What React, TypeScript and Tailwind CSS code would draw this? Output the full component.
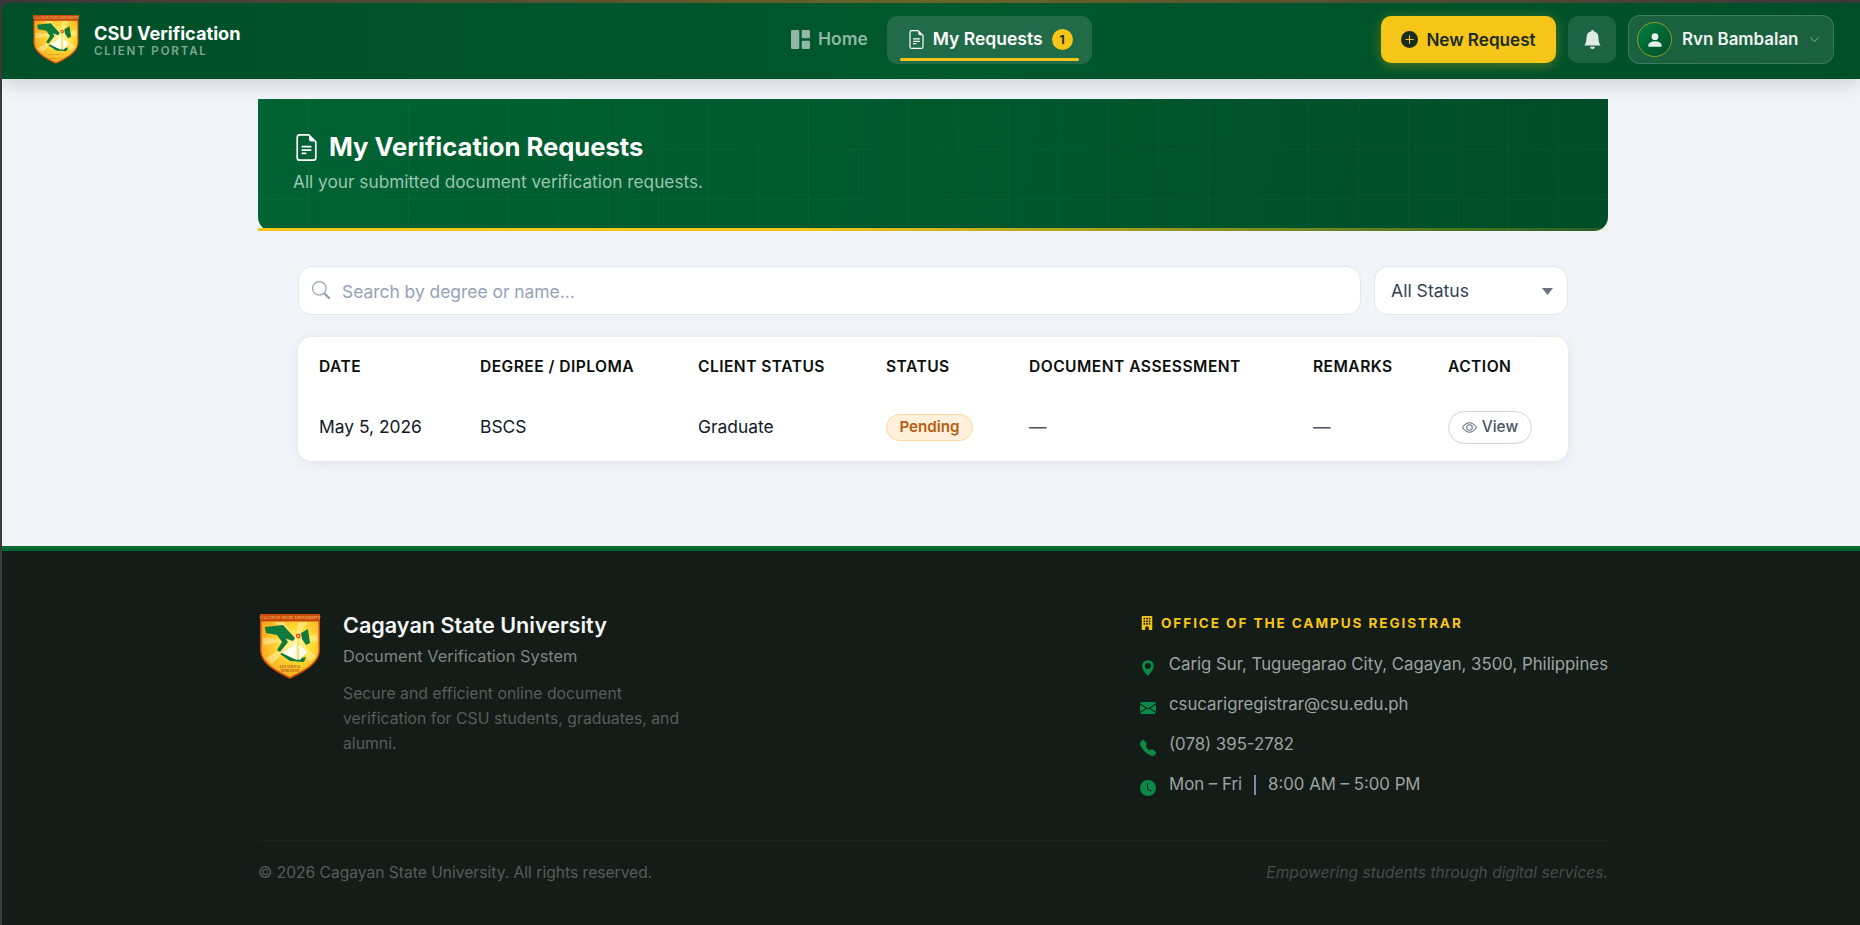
import {
  BsBellFill,
  BsBuildingFill,
  BsChevronDown,
  BsClockFill,
  BsEnvelopeFill,
  BsEye,
  BsFileEarmarkText,
  BsGeoAltFill,
  BsGrid1X2Fill,
  BsPersonFill,
  BsPlusCircleFill,
  BsSearch,
  BsTelephoneFill,
} from "react-icons/bs"

// CSU seal, drawn by hand since there are no image files here
function CsuSeal({ className }: { className?: string }) {
  return (
    <svg viewBox="0 0 60 65" className={className}>
      <defs>
        <radialGradient id="sealSun" cx="0.6" cy="0.4" r="0.7">
          <stop offset="0" stopColor="#fff9b0" />
          <stop offset="0.4" stopColor="#ffdc34" />
          <stop offset="1" stopColor="#f8a01e" />
        </radialGradient>
      </defs>
      <path d="M0 0H60V36C60 50 44 58 30 65C16 58 0 50 0 36Z" fill="#c9480c" />
      <path d="M1.5 7.5H58.5V36C58.5 49 43 56.5 30 63C17 56.5 1.5 49 1.5 36Z" fill="url(#sealSun)" />
      <path d="M36 26L14 8H24ZM36 26L38 8H48ZM36 26L3 24V31ZM36 26L57 20V28ZM36 26L6 44L12 50ZM36 26L56 42L50 48Z" fill="#fff6b0" opacity="0.5" />
      <text x="30" y="5.4" textAnchor="middle" fontSize="4.3" fontFamily="Liberation Serif, serif" fill="#ffd87a">
        CAGAYAN STATE UNIVERSITY
      </text>
      <path d="M5 13L23 11L35 24L33 27L24 24L17 21L6 19Z" fill="#0f7a3c" />
      <path d="M17 21L24 22L28 28L20 38L17 36L22 28Z" fill="#0f7a3c" />
      <path d="M41 19L48 15L50 29L46 31L42 25Z" fill="#0f7a3c" />
      <path d="M20 40L30 47L44 48L46 43L35 45L24 38Z" fill="#0f7a3c" />
      <path d="M22 39L36 30L37 46L30 43Z" fill="#fffdf0" />
      <path d="M39 31L47 38L40 46L39 45Z" fill="#fffdf0" />
      <rect x="37.4" y="24" width="1.8" height="22" fill="#f3e27a" />
      <circle cx="38.3" cy="22" r="2.4" fill="#e8461c" />
      <circle cx="38.3" cy="22" r="1.1" fill="#ffe24a" />
      <text x="30" y="53.5" textAnchor="middle" fontSize="3.2" fontFamily="Liberation Serif, serif" fill="#8a2b08">
        LUX VERITAS
      </text>
      <text x="30" y="57.8" textAnchor="middle" fontSize="3" fontFamily="Liberation Serif, serif" fill="#8a2b08">
        MCMLXXVIII
      </text>
    </svg>
  )
}

function Header() {
  return (
    <header className="relative z-10 flex h-[76px] shrink-0 items-center rounded-tl-[6px] bg-[linear-gradient(90deg,#004f29,#00582d_50%,#004f29)] pb-[3px] pl-[30px] pr-[26px] shadow-[0_4px_20px_rgba(0,0,0,0.16)]">
      <div className="flex w-[738px] items-center gap-[14px]">
        <CsuSeal className="h-[49px] w-[48px]" />
        <div>
          <div className="text-[18.2px] leading-[22px] font-bold text-white">CSU Verification</div>
          <div className="text-[11.5px] leading-[14px] font-semibold tracking-[1.86px] text-[#7fa892]">CLIENT PORTAL</div>
        </div>
      </div>
      <nav className="flex items-center">
        <a className="flex h-[48px] items-center gap-[8px] pl-[21px] pr-[19px] text-[17.5px] font-semibold text-[#8fb8a5]">
          <BsGrid1X2Fill className="h-[19px] w-[19px]" />
          Home
        </a>
        <a className="relative flex h-[48px] items-center gap-[7px] rounded-[10px] bg-[#226b49] pl-[20px] pr-[19px] text-[17.5px] font-semibold text-white">
          <BsFileEarmarkText className="h-[19px] w-[19px]" />
          My Requests
          <span className="ml-[2px] flex h-[21px] w-[21px] items-center justify-center rounded-full bg-[#f5c518] text-[12px] font-bold text-[#1a2b1f]">
            1
          </span>
          <span className="absolute bottom-[3px] left-[13px] right-[13px] h-[3px] rounded-full bg-[#f5c518]" />
        </a>
      </nav>
      <div className="ml-auto flex items-center gap-[12px]">
        <button className="flex h-[47px] w-[175px] items-center justify-center gap-[8px] rounded-[10px] bg-[#f5c518] text-[17.1px] font-semibold text-[#1a2b1f] shadow-[0_2px_12px_rgba(245,197,24,0.35)]">
          <BsPlusCircleFill className="h-[17px] w-[17px]" />
          New Request
        </button>
        <button className="flex h-[47px] w-[48px] items-center justify-center rounded-[10px] bg-[#1d6443] text-[#e0e9e4]">
          <BsBellFill className="h-[19px] w-[19px]" />
        </button>
        <div className="flex h-[49px] w-[206px] items-center rounded-[12px] border border-white/15 bg-white/10 pl-[8px] text-white">
          <div className="flex h-[35px] w-[35px] items-center justify-center rounded-full border border-[#8f9a26] bg-[linear-gradient(135deg,#00803f,#004d27)]">
            <BsPersonFill className="h-[18px] w-[18px] text-[#e8f0ec]" />
          </div>
          <span className="ml-[10px] text-[16.9px] font-semibold text-[#eef3f0]">Rvn Bambalan</span>
          <BsChevronDown className="ml-[11px] h-[11px] w-[11px] text-[#8fb8a5]" />
        </div>
      </div>
    </header>
  )
}

function PageHero() {
  return (
    <section className="relative mt-[20px] h-[132px] rounded-b-[14px] bg-[linear-gradient(rgba(255,255,255,0.025)_1px,transparent_1px),linear-gradient(90deg,rgba(255,255,255,0.025)_1px,transparent_1px),linear-gradient(100deg,#006333,#004d27)] bg-[size:50px_50px,50px_50px,100%_100%] pl-[35px] pt-[33px]">
      <div className="flex items-center gap-[9px]">
        <BsFileEarmarkText className="h-[27px] w-[27px] text-white" />
        <h1 className="text-[25.6px] leading-[30px] font-bold text-white">My Verification Requests</h1>
      </div>
      <p className="mt-[8px] text-[17.25px] leading-[24px] text-[#9cc5b0]">All your submitted document verification requests.</p>
      <div className="absolute inset-x-0 bottom-0 h-[3px] bg-[linear-gradient(90deg,#f5c518,#f5c518_40%,rgba(245,197,24,0.15))]" />
    </section>
  )
}

function Filters() {
  return (
    <div className="mx-[40px] mt-[35px] flex gap-[13px]">
      <div className="relative flex-1">
        <BsSearch className="absolute left-[14px] top-[15px] h-[18px] w-[18px] text-[#94a3b8]" />
        <input
          placeholder="Search by degree or name..."
          className="h-[49px] w-full rounded-[14px] border border-[#e2e8f0] bg-white pl-[43px] pt-[2px] text-[17.4px] outline-none placeholder:text-[#94a3b8]"
        />
      </div>
      <div className="relative h-[49px] w-[194px] rounded-[14px] border border-[#e2e8f0] bg-white">
        <select className="h-full w-full appearance-none bg-transparent pl-[16px] pt-[2px] text-[17.6px] text-[#334155] outline-none">
          <option>All Status</option>
        </select>
        <svg viewBox="0 0 11 7" className="absolute right-[14px] top-[21px] h-[7px] w-[11px]">
          <path d="M0 0H11L5.5 7Z" fill="#6b7280" />
        </svg>
      </div>
    </div>
  )
}

const columns = ["Date", "Degree / Diploma", "Client Status", "Status", "Document Assessment", "Remarks", "Action"]

function RequestsTable() {
  return (
    <div className="mx-[40px] mt-[22px] rounded-[14px] bg-white px-[21px] shadow-[0_2px_12px_rgba(15,23,42,0.08)]">
      <table className="w-full table-fixed text-left">
        <colgroup>
          <col className="w-[161px]" />
          <col className="w-[218px]" />
          <col className="w-[188px]" />
          <col className="w-[143px]" />
          <col className="w-[284px]" />
          <col className="w-[135px]" />
          <col />
        </colgroup>
        <thead>
          <tr className="h-[60px]">
            {columns.map((col) => (
              <th key={col} className="text-[15.6px] font-semibold tracking-[0.45px] text-[#0b0f0d] uppercase">
                {col}
              </th>
            ))}
          </tr>
        </thead>
        <tbody>
          <tr className="text-[17.4px] text-[#111827]">
            <td className="h-[64px] pb-[4px]">May 5, 2026</td>
            <td className="pb-[4px]">BSCS</td>
            <td className="pb-[4px]">Graduate</td>
            <td className="pb-[4px]">
              <span className="inline-flex h-[27px] w-[87px] items-center justify-center rounded-full border border-[#f9d9a0] bg-[#fef0da] text-[15.2px] font-semibold text-[#b85c10]">
                Pending
              </span>
            </td>
            <td className="pb-[4px] text-[#4b5563]">—</td>
            <td className="pb-[4px] text-[#4b5563]">—</td>
            <td className="pb-[4px]">
              <button className="flex h-[33px] w-[84px] items-center justify-center gap-[5px] rounded-full border border-[#cbd5e1] bg-white text-[15.4px] font-medium text-[#475569]">
                <BsEye className="h-[15px] w-[15px] text-[#64748b]" />
                View
              </button>
            </td>
          </tr>
        </tbody>
      </table>
    </div>
  )
}

const contacts = [
  { icon: BsGeoAltFill, text: "Carig Sur, Tuguegarao City, Cagayan, 3500, Philippines" },
  { icon: BsEnvelopeFill, text: "csucarigregistrar@csu.edu.ph" },
  { icon: BsTelephoneFill, text: "(078) 395-2782" },
  { icon: BsClockFill, text: "hours" },
]

function Footer() {
  return (
    <footer className="flex-1 border-t-[5px] border-[#03652f] bg-[#141c18]">
      <div className="ml-[256px] w-[1350px]">
        <div className="flex h-[289px] justify-between pt-[63px]">
          <div className="flex gap-[22px] pl-[1px]">
            <CsuSeal className="h-[65px] w-[62px]" />
            <div>
              <div className="text-[21.6px] leading-[22px] font-semibold text-[#f3f6f5]">Cagayan State University</div>
              <div className="mt-[9px] text-[16.4px] leading-[22px] text-[#7d8481]">Document Verification System</div>
              <p className="mt-[14px] w-[345px] text-[15.8px] leading-[25px] text-[#565d5a]">
                Secure and efficient online document verification for CSU students, graduates, and alumni.
              </p>
            </div>
          </div>
          <div className="w-[468px]">
            <div className="flex h-[18px] items-center gap-[7px] text-[13.6px] font-bold tracking-[1.9px] text-[#f5c518]">
              <BsBuildingFill className="h-[14px] w-[14px]" />
              OFFICE OF THE CAMPUS REGISTRAR
            </div>
            <ul className="mt-[13px]">
              {contacts.map(({ icon: Icon, text }) => (
                <li key={text} className="flex h-[40px] items-center gap-[13px] text-[16.8px] whitespace-nowrap text-[#9ca3a0]">
                  <Icon className="relative top-[3px] h-[16px] w-[16px] text-[#0b8a47]" />
                  {text === "hours" ? (
                    <span className="flex items-center">
                      Mon – Fri
                      <span className="mx-[12px] h-[20px] w-[2px] bg-[#7d8aa8]" />
                      8:00 AM – 5:00 PM
                    </span>
                  ) : (
                    text
                  )}
                </li>
              ))}
            </ul>
          </div>
        </div>
        <div className="flex justify-between border-t border-white/[0.03] pt-[22px] text-[15.6px] leading-[20px]">
          <span className="text-[#555c59]">© 2026 Cagayan State University. All rights reserved.</span>
          <span className="text-[#454c49] italic">Empowering students through digital services.</span>
        </div>
      </div>
    </footer>
  )
}

export default function App() {
  return (
    <div className="flex min-h-screen flex-col bg-[#3b3b3d] pl-[2px] font-['Inter',sans-serif]">
      <div className="h-[3px] shrink-0 bg-[linear-gradient(90deg,#3b3b3d,#6f6a2a_50%,#3b3b3d)]" />
      <Header />
      <main className="h-[467px] shrink-0 bg-[#f1f4f9]">
        <div className="ml-[256px] w-[1350px]">
          <PageHero />
          <Filters />
          <RequestsTable />
        </div>
      </main>
      <Footer />
    </div>
  )
}
